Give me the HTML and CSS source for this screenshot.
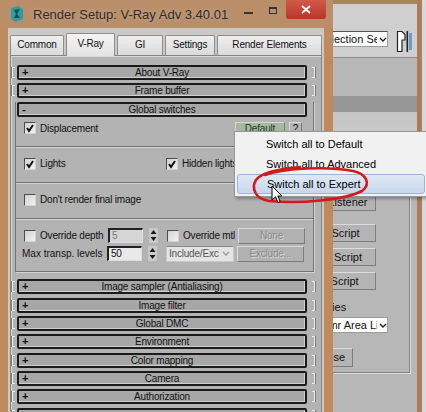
FILE: index.html
```html
<!DOCTYPE html>
<html lang="en">
<head>
    <meta charset="UTF-8">
    <title>Render Setup: V-Ray Adv 3.40.01</title>
    <link rel="stylesheet" href="styles.css">
</head>
<body>
<div class="screen">
    <div class="dialog">
        <div class="titlebar">
            <svg class="app-icon" width="14" height="16" viewBox="0 0 14 16">
                <path d="M1 2 L8 0 L13 3 L13 13 L6 16 L1 13 Z" fill="#2c9ea3"/>
                <path d="M4 4 L10 3 L7 8 L10 12 L4 12 L6 8 Z" fill="#0f4d57"/>
            </svg>
            <span class="title">Render Setup: V-Ray Adv 3.40.01</span>
            <div class="win-ctrls">
                <span class="win-min"></span>
                <span class="win-max"></span>
                <span class="win-close">
                    <svg width="10" height="9" viewBox="0 0 10 9"><path d="M1 1 L9 8 M9 1 L1 8" stroke="#fff" stroke-width="1.8"/></svg>
                </span>
            </div>
        </div>

        <div class="client">
            <div class="tabs">
                <span class="tab w-common">Common</span>
                <span class="tab w-vray active">V-Ray</span>
                <span class="tab w-gi">GI</span>
                <span class="tab w-settings">Settings</span>
                <span class="tab w-elements">Render Elements</span>
            </div>

            <div class="page">
                <div class="roll"><i class="mark-l"></i><div class="bar"><b>+</b><span>About V-Ray</span></div><i class="mark-r"></i></div>
                <div class="roll"><i class="mark-l"></i><div class="bar"><b>+</b><span>Frame buffer</span></div><i class="mark-r"></i></div>

                <!-- expanded rollout -->
                <div class="rollout">
                    <div class="bar"><b>-</b><span>Global switches</span></div>

                    <div class="grp first">
                        <div class="row">
                            <span class="cb on"><svg viewBox="0 0 10 10"><path d="M2 5 L4 8 L8 2"/></svg></span>
                            <span class="txt">Displacement</span>
                            <span class="btn-mode">Default</span>
                            <span class="btn-help">?</span>
                        </div>
                    </div>

                    <div class="grp">
                        <div class="row">
                            <span class="cb-item">
                                <span class="cb on"><svg viewBox="0 0 10 10"><path d="M2 5 L4 8 L8 2"/></svg></span>
                                <span class="txt">Lights</span>
                            </span>
                            <span class="cb on"><svg viewBox="0 0 10 10"><path d="M2 5 L4 8 L8 2"/></svg></span>
                            <span class="txt">Hidden lights</span>
                        </div>
                    </div>

                    <div class="grp">
                        <div class="row">
                            <span class="cb"></span>
                            <span class="txt">Don't render final image</span>
                        </div>
                    </div>

                    <div class="grp last">
                        <div class="row short">
                            <span class="lbl"><span class="cb"></span><span class="txt">Override depth</span></span>
                            <span class="num off">5</span>
                            <svg class="spinner" viewBox="0 0 9 15"><rect width="9" height="15" fill="#c9c9c9"/><path d="M1.5 6 L4.5 2 L7.5 6 Z M1.5 9 L4.5 13 L7.5 9 Z" fill="#1a1a1a"/></svg>
                            <span class="lbl mtl"><span class="cb"></span><span class="txt">Override mtl</span></span>
                            <span class="btn off">None</span>
                        </div>
                        <div class="row short">
                            <span class="lbl plain">Max transp. levels</span>
                            <span class="num">50</span>
                            <svg class="spinner" viewBox="0 0 9 15"><rect width="9" height="15" fill="#c9c9c9"/><path d="M1.5 6 L4.5 2 L7.5 6 Z M1.5 9 L4.5 13 L7.5 9 Z" fill="#1a1a1a"/></svg>
                            <span class="select"><span class="select-text">Include/Exclude</span><svg viewBox="0 0 8 5"><path d="M1 1 L4 4 L7 1" fill="none" stroke="#9a9a9a" stroke-width="1.3"/></svg></span>
                            <span class="btn off">Exclude...</span>
                        </div>
                    </div>
                </div>

                <div class="roll"><i class="mark-l"></i><div class="bar"><b>+</b><span>Image sampler (Antialiasing)</span></div><i class="mark-r"></i></div>
                <div class="roll"><i class="mark-l"></i><div class="bar"><b>+</b><span>Image filter</span></div><i class="mark-r"></i></div>
                <div class="roll"><i class="mark-l"></i><div class="bar"><b>+</b><span>Global DMC</span></div><i class="mark-r"></i></div>
                <div class="roll"><i class="mark-l"></i><div class="bar"><b>+</b><span>Environment</span></div><i class="mark-r"></i></div>
                <div class="roll"><i class="mark-l"></i><div class="bar"><b>+</b><span>Color mapping</span></div><i class="mark-r"></i></div>
                <div class="roll"><i class="mark-l"></i><div class="bar"><b>+</b><span>Camera</span></div><i class="mark-r"></i></div>
                <div class="roll"><i class="mark-l"></i><div class="bar"><b>+</b><span>Authorization</span></div><i class="mark-r"></i></div>
                <div class="roll"><i class="mark-l"></i><div class="bar"><b>+</b><span></span></div><i class="mark-r"></i></div>
            </div>
        </div>
    </div>

    <!-- main application behind the dialog -->
    <div class="app">
        <div class="app-main">
            <div class="app-head">
                <span class="set-select"><span class="set-text">Create Selection Set</span><svg viewBox="0 0 8 5"><path d="M1 1 L4 4 L7 1" fill="none" stroke="#222" stroke-width="1.4"/></svg></span>
                <svg class="snap-icon" width="16" height="23" viewBox="0 0 16 23">
                    <path d="M1.5 1.5 H6 L9 4.5 V10 H6 V21.5 H1.5 Z" fill="#fff" stroke="#222" stroke-width="1.2"/>
                    <rect x="10.5" y="1" width="1.6" height="21" fill="#222"/>
                    <rect x="13" y="3" width="3" height="17" fill="#6c9ad0"/>
                </svg>
            </div>
            <div class="band1"></div>
            <div class="band2"></div>
            <div class="band3"></div>
            <div class="util">
                <span class="ubtn">Open Listener</span>
                <span class="ubtn gap">New Script</span>
                <span class="ubtn">Open Script</span>
                <span class="ubtn">Run Script</span>
                <span class="util-label">Properties</span>
                <span class="light-select"><span class="light-text">Sky mr Area Light</span><svg viewBox="0 0 8 5"><path d="M1 1 L4 4 L7 1" fill="none" stroke="#222" stroke-width="1.4"/></svg></span>
                <span class="ubtn close">Close</span>
            </div>
        </div>
        <div class="app-edge"></div>
        <div class="app-rim"></div>
    </div>

    <!-- popup from the Default button -->
    <div class="menu">
        <div class="menu-item">Switch all to Default</div>
        <div class="menu-item">Switch all to Advanced</div>
        <div class="menu-item hot">Switch all to Expert</div>
    </div>

    <svg class="scribble" width="140" height="52" viewBox="0 0 140 52">
        <path d="M20 15 C40 8 82 6 108 11 C122 14 126 24 117 31 C100 40 55 44 24 41 C10 39 6 28 11 20 C16 13 32 9 55 7" fill="none" stroke="#d21a1a" stroke-width="2.6" stroke-linecap="round"/>
    </svg>

    <svg class="cursor" width="13" height="20" viewBox="0 0 13 20">
        <path d="M1 1 L1 15 L4.5 11.8 L7 17.5 L9.2 16.5 L6.8 11 L11 11 Z" fill="#fff" stroke="#000" stroke-width="1"/>
    </svg>
</div>
</body>
</html>
```

FILE: styles.css
```css
* {
    box-sizing: border-box;
}
body {
    margin: 0;
    font-family: "Liberation Sans", Arial, sans-serif;
    font-size: 11px;
    color: #111;
    background: #b7b7b7;
}
.screen {
    position: relative;
    display: flex;
    width: 426px;
    height: 412px;
    overflow: hidden;
}

/* dialog window */
.dialog {
    flex: none;
    width: 333px;
    display: flex;
    flex-direction: column;
    padding: 0 9px 0 8px;
    background: #bf8a5c;
}
.titlebar {
    display: flex;
    align-items: flex-start;
    height: 28px;
    margin: 0 -9px 0 -8px;
    padding-left: 10px;
    background: #b98e69;
}
.app-icon {
    margin-top: 6px;
}
.title {
    margin-left: 9px;
    font-size: 13px;
    line-height: 30px;
    color: #2e2e2e;
    text-shadow: 0 0 6px rgba(255, 255, 255, 0.35);
    white-space: nowrap;
}
.win-ctrls {
    display: flex;
    align-items: flex-start;
    margin-left: auto;
}
.win-min {
    width: 9px;
    height: 2px;
    margin: 12px 16px 0 0;
    background: #333;
}
.win-max {
    width: 8px;
    height: 7px;
    margin: 7px 9px 0 0;
    border: 1px solid #333;
    border-top-width: 2px;
}
.win-close {
    display: flex;
    align-items: center;
    justify-content: center;
    width: 40px;
    height: 19px;
    margin-right: 7px;
    background: linear-gradient(#d25a4b, #b83527);
    border-radius: 0 0 3px 3px;
}
.win-close svg {
    width: 10px;
    height: 9px;
}

.client {
    flex: 1;
    display: flex;
    flex-direction: column;
    padding: 5px 2px 0;
    font-size: 10px;
    letter-spacing: -0.2px;
    background: #ccc8c4;
}

/* tabs */
.tabs {
    display: flex;
    align-items: flex-end;
    gap: 2px;
    height: 22px;
}
.tab {
    height: 20px;
    line-height: 18px;
    text-align: center;
    border: 1px solid #8d8d8d;
    border-bottom: none;
    border-radius: 2px 2px 0 0;
    background: linear-gradient(#efefef, #dadada);
}
.tab.active {
    position: relative;
    height: 23px;
    margin-bottom: -1px;
    line-height: 20px;
    background: linear-gradient(#f4f4f4, #e2e2e2);
}
.w-common { width: 54px; }
.w-vray { width: 49px; }
.w-gi { width: 46px; }
.w-settings { width: 50px; }
.w-elements { width: 105px; }

.page {
    flex: 1;
    padding-top: 9px;
    border: 1px solid #858585;
    border-bottom: none;
    background: #b3b3b3;
    box-shadow: inset 1px 1px 0 #d6d6d6;
}

/* collapsed rollouts */
.roll {
    display: flex;
    align-items: center;
    height: 15px;
    margin-bottom: 3.33px;
    padding-left: 1px;
}
.mark-l,
.mark-r {
    width: 3px;
    height: 11px;
    border: 1px solid #ececec;
}
.mark-l {
    margin-right: 2px;
    border-right: none;
    box-shadow: -1px 0 0 #7a7a7a;
}
.mark-r {
    margin-left: 5px;
    border-left: none;
    box-shadow: 1px 0 0 #7a7a7a;
}
.bar {
    display: grid;
    grid-template-columns: 18px 1fr 18px;
    align-items: center;
    width: 290px;
    height: 15px;
    line-height: 11px;
    border: 2px solid #1b1b1b;
    border-radius: 2px;
    background: #a7a7a7;
    box-shadow: inset -1px -1px 0 #cfcfcf;
}
.bar b {
    padding-left: 3px;
    font-size: 11px;
    font-weight: bold;
}
.bar span {
    text-align: center;
    white-space: nowrap;
}

/* expanded rollout */
.rollout {
    width: 299px;
    margin: 0 0 7.8px 4px;
    border: 1px solid #727272;
    border-top: none;
    box-shadow: 1px 1px 0 #d4d4d4;
}
.rollout > .bar {
    margin-left: 1px;
}
.grp {
    padding: 7.5px 8px 9.5px 8px;
    border-top: 1px solid #d3d3d3;
    border-bottom: 1px solid #747474;
}
.grp.first {
    padding-top: 3px;
    padding-bottom: 9px;
    border-top: none;
}
.grp.last {
    padding-top: 8px;
    padding-bottom: 9px;
    border-bottom: none;
}
.row {
    display: flex;
    align-items: center;
    height: 17px;
    white-space: nowrap;
}
.row.short {
    height: 16px;
}
.row.short + .row.short {
    margin-top: 2px;
}
.cb {
    flex: none;
    width: 12px;
    height: 12px;
    border: 1px solid;
    border-color: #4d4d4d #d2d2d2 #d2d2d2 #4d4d4d;
    background: linear-gradient(135deg, #d2d2d2, #f2f2f2);
}
.cb svg {
    display: block;
    width: 10px;
    height: 10px;
    fill: none;
    stroke: #111;
    stroke-width: 2;
}
.txt {
    margin-left: 4px;
}
.cb-item {
    display: flex;
    align-items: center;
    width: 142px;
}
.btn-mode {
    width: 50px;
    height: 13px;
    margin-left: auto;
    line-height: 11px;
    text-align: center;
    color: #2a3a2a;
    border: 1px solid;
    border-color: #cfdccb #76866f #76866f #cfdccb;
    background: #a6b8a0;
}
.btn-help {
    width: 13px;
    height: 13px;
    margin: 0 3px 0 4px;
    line-height: 11px;
    text-align: center;
    border: 1px solid;
    border-color: #d8d8d8 #7a7a7a #7a7a7a #d8d8d8;
    background: #b6b6b6;
}

.lbl {
    display: flex;
    align-items: center;
    flex: none;
    width: 84px;
}
.lbl.plain {
    width: 85px;
    margin-left: -2px;
    letter-spacing: 0;
}
.lbl.mtl {
    width: 71px;
    margin-left: 9px;
}
.num {
    width: 35px;
    height: 15px;
    padding-left: 2px;
    line-height: 12px;
    border-style: solid;
    border-width: 2px 1px 1px 2px;
    border-color: #222 #dedede #dedede #222;
    background: #e9e9e9;
}
.num.off {
    color: #7a7a7a;
    background: #d5d5d5;
}
.spinner {
    width: 9px;
    height: 15px;
    margin-left: 6px;
}
.select {
    display: flex;
    align-items: center;
    width: 68px;
    height: 16px;
    margin-left: 9px;
    padding: 0 3px 0 2px;
    color: #555;
    border: 1px solid #c8c8c8;
    border-top-color: #8a8a8a;
    background: #e4e4e4;
}
.select-text {
    width: 53px;
    overflow: hidden;
    white-space: nowrap;
}
.select svg {
    flex: none;
    width: 8px;
    height: 5px;
    margin-left: 3px;
}
.btn {
    width: 67px;
    height: 16px;
    margin-left: 3px;
    line-height: 14px;
    text-align: center;
    border: 1px solid;
    border-color: #dadada #7c7c7c #7c7c7c #dadada;
    background: #b1b1b1;
}
.lbl.mtl + .btn {
    margin-left: 0;
}
.btn.off {
    color: #8b8b8b;
    text-shadow: 1px 1px 0 #d6d6d6;
}

/* application behind */
.app {
    flex: 1;
    display: flex;
    overflow: hidden;
    background: #b7b7b7;
}
.app-main {
    display: flex;
    flex-direction: column;
    width: 84px;
}
.app-edge {
    width: 4px;
    background: #b07b4d;
}
.app-rim {
    flex: 1;
    border-left: 1px solid #8a8a8a;
    background: #d8d8d8;
}
.app-head {
    display: flex;
    align-items: flex-start;
    height: 57px;
    padding-top: 27px;
    border-top: 4px solid #a8845f;
    background: #cfcfcf;
}
.set-select {
    display: flex;
    align-items: center;
    flex: none;
    width: 110px;
    height: 16px;
    margin-left: -55px;
    padding-left: 3px;
    border: 1px solid #9c9c9c;
    border-top-color: #555;
    background: #fff;
}
.set-text {
    width: 98px;
    overflow: hidden;
    white-space: nowrap;
}
.set-select svg,
.light-select svg {
    flex: none;
    width: 8px;
    height: 5px;
    margin-left: 2px;
}
.snap-icon {
    flex: none;
    margin: -1px 0 0 8px;
}
.band1 {
    height: 39px;
    border-top: 1px solid #8d8d8d;
    background: #b8b8b8;
}
.band2 {
    height: 16px;
    background: #979797;
}
.band3 {
    height: 74px;
    background: linear-gradient(#c5c5c5, #d2d2d2);
}
.util {
    display: flex;
    flex-direction: column;
    align-items: flex-start;
    width: 77px;
    height: 187px;
    padding-top: 7px;
    border-right: 1px solid #858585;
    border-bottom: 1px solid #858585;
    box-shadow: 1px 1px 0 #dddddd;
}
.ubtn {
    flex: none;
    width: 86px;
    height: 18px;
    margin: 6px 0 0 -43px;
    line-height: 16px;
    text-align: center;
    white-space: nowrap;
    border: 1px solid;
    border-color: #dcdcdc #7c7c7c #7c7c7c #dcdcdc;
    background: #b4b4b4;
}
.ubtn:first-child {
    margin-top: 0;
}
.ubtn.gap {
    margin-top: 13px;
}
.util-label {
    margin: 11px 0 0 -37px;
    line-height: 12px;
    white-space: nowrap;
}
.light-select {
    display: flex;
    align-items: center;
    flex: none;
    width: 85px;
    height: 16px;
    margin: 4px 0 0 -30px;
    padding-left: 3px;
    border: 1px solid #9c9c9c;
    background: #fff;
}
.light-text {
    width: 71px;
    overflow: hidden;
    white-space: nowrap;
}
.ubtn.close {
    width: 44px;
    height: 19px;
    margin: 15px 0 0 -24px;
    line-height: 17px;
}

/* context menu */
.menu {
    position: absolute;
    left: 234px;
    top: 131px;
    width: 194px;
    padding: 2px 0;
    border: 1px solid #979797;
    background: #f1f1f1;
    box-shadow: 2px 2px 3px rgba(0, 0, 0, 0.3);
}
.menu-item {
    height: 20px;
    margin: 0 2px;
    padding-left: 29px;
    line-height: 20px;
    color: #000;
    white-space: nowrap;
}
.menu-item.hot {
    line-height: 18px;
    border: 1px solid #9db6d8;
    border-radius: 3px;
    background: linear-gradient(#dfe9f5, #c7d7ea);
}

.scribble {
    position: absolute;
    left: 245px;
    top: 160px;
}
.cursor {
    position: absolute;
    left: 271px;
    top: 185px;
}
```
